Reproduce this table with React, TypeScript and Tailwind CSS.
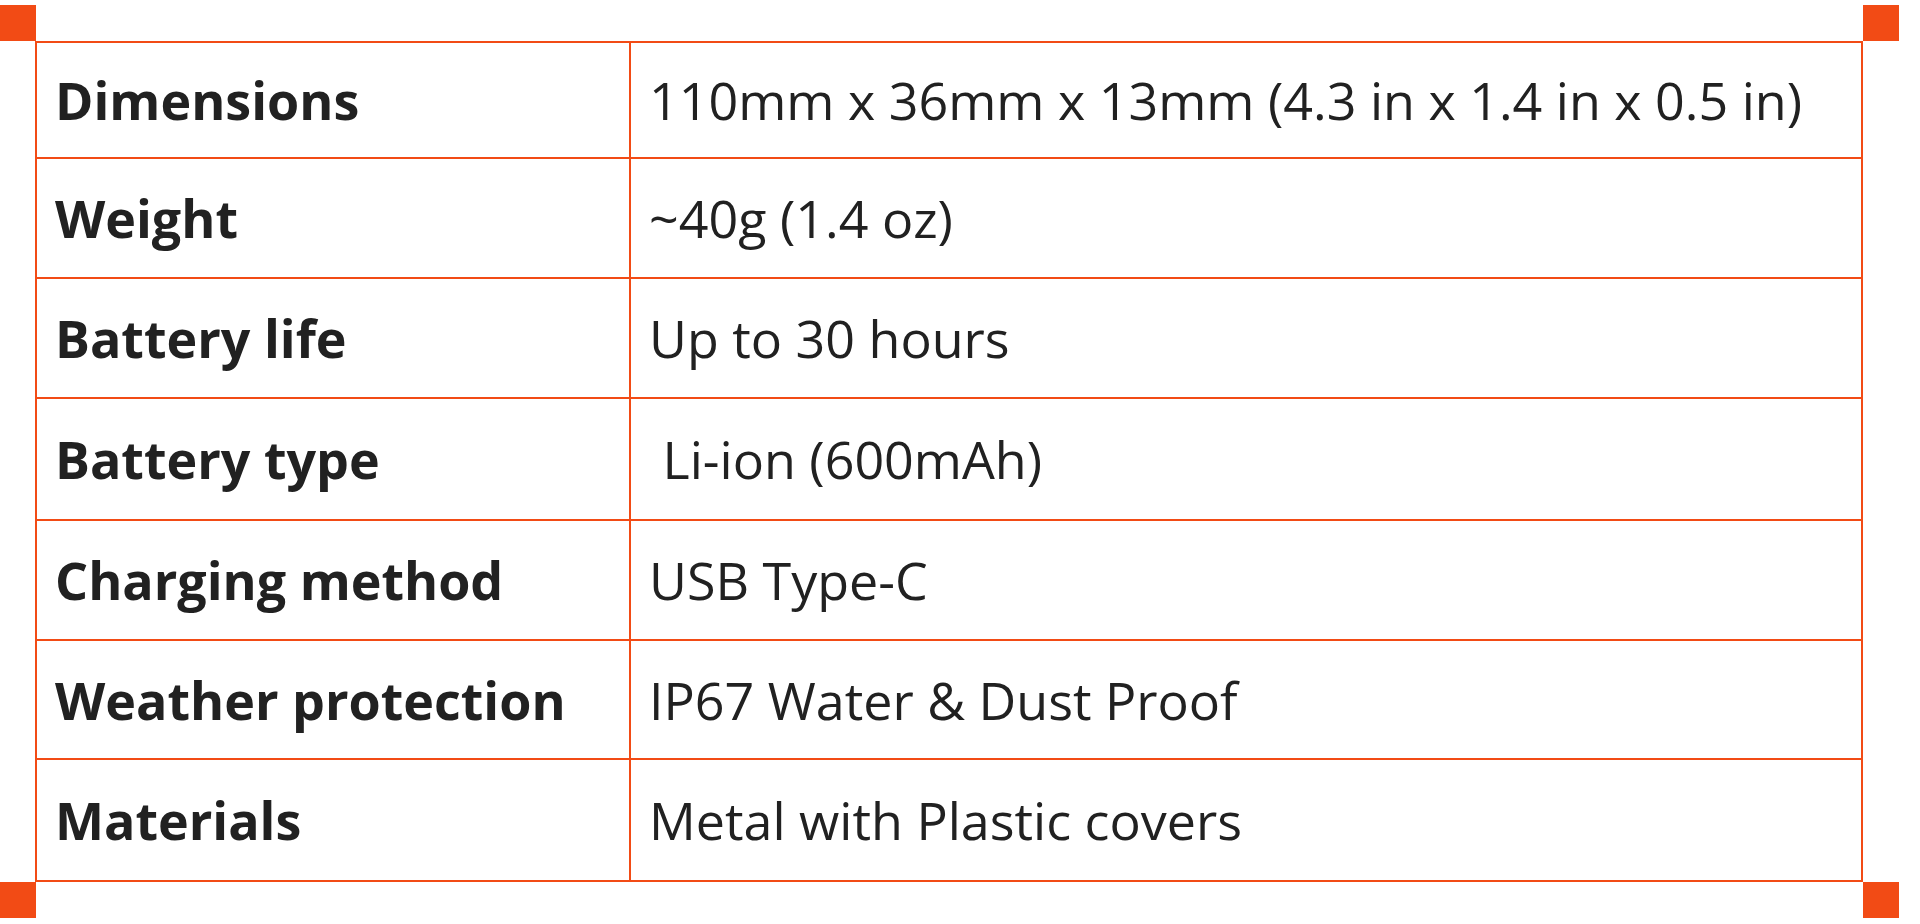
const specs = [
  { label: 'Dimensions', value: '110mm x 36mm x 13mm (4.3 in x 1.4 in x 0.5 in)', h: 'h-[114px]' },
  { label: 'Weight', value: '~40g (1.4 oz)', h: 'h-[118px]' },
  { label: 'Battery life', value: 'Up to 30 hours', h: 'h-[118px]' },
  { label: 'Battery type', value: '\u00a0Li-ion (600mAh)', h: 'h-[120px]' },
  { label: 'Charging method', value: 'USB Type-C', h: 'h-[118px]' },
  { label: 'Weather protection', value: 'IP67 Water & Dust Proof', h: 'h-[117px]' },
  { label: 'Materials', value: 'Metal with Plastic covers', h: 'h-[120px]' },
]

function Corner({ pos }: { pos: string }) {
  return <span className={`absolute w-[36px] h-[36px] bg-[#f24b15] ${pos}`} />
}

export default function App() {
  return (
    <div className="min-h-screen w-full bg-white pl-[35px] pt-[41px] font-['Open_Sans',sans-serif] text-[#212121]">
      <div className="relative w-[1828px]">
        <Corner pos="-left-[35px] -top-[36px]" />
        <Corner pos="-right-[36px] -top-[36px]" />
        <Corner pos="-left-[35px] -bottom-[36px]" />
        <Corner pos="-right-[36px] -bottom-[36px]" />

        <div className="border-2 border-[#f24b15]">
          {specs.map((row, i) => (
            <div
              key={row.label}
              className={`grid grid-cols-[592px_1fr] ${i > 0 ? 'border-t-2 border-[#f24b15]' : ''}`}
            >
              <div className={`${row.h} flex items-center pl-[18px] text-[52px] font-bold leading-none`}>
                {row.label}
              </div>
              <div className={`${row.h} flex items-center border-l-2 border-[#f24b15] pl-[18px] text-[52px] font-normal leading-none whitespace-pre`}>
                {row.value}
              </div>
            </div>
          ))}
        </div>
      </div>
    </div>
  )
}
